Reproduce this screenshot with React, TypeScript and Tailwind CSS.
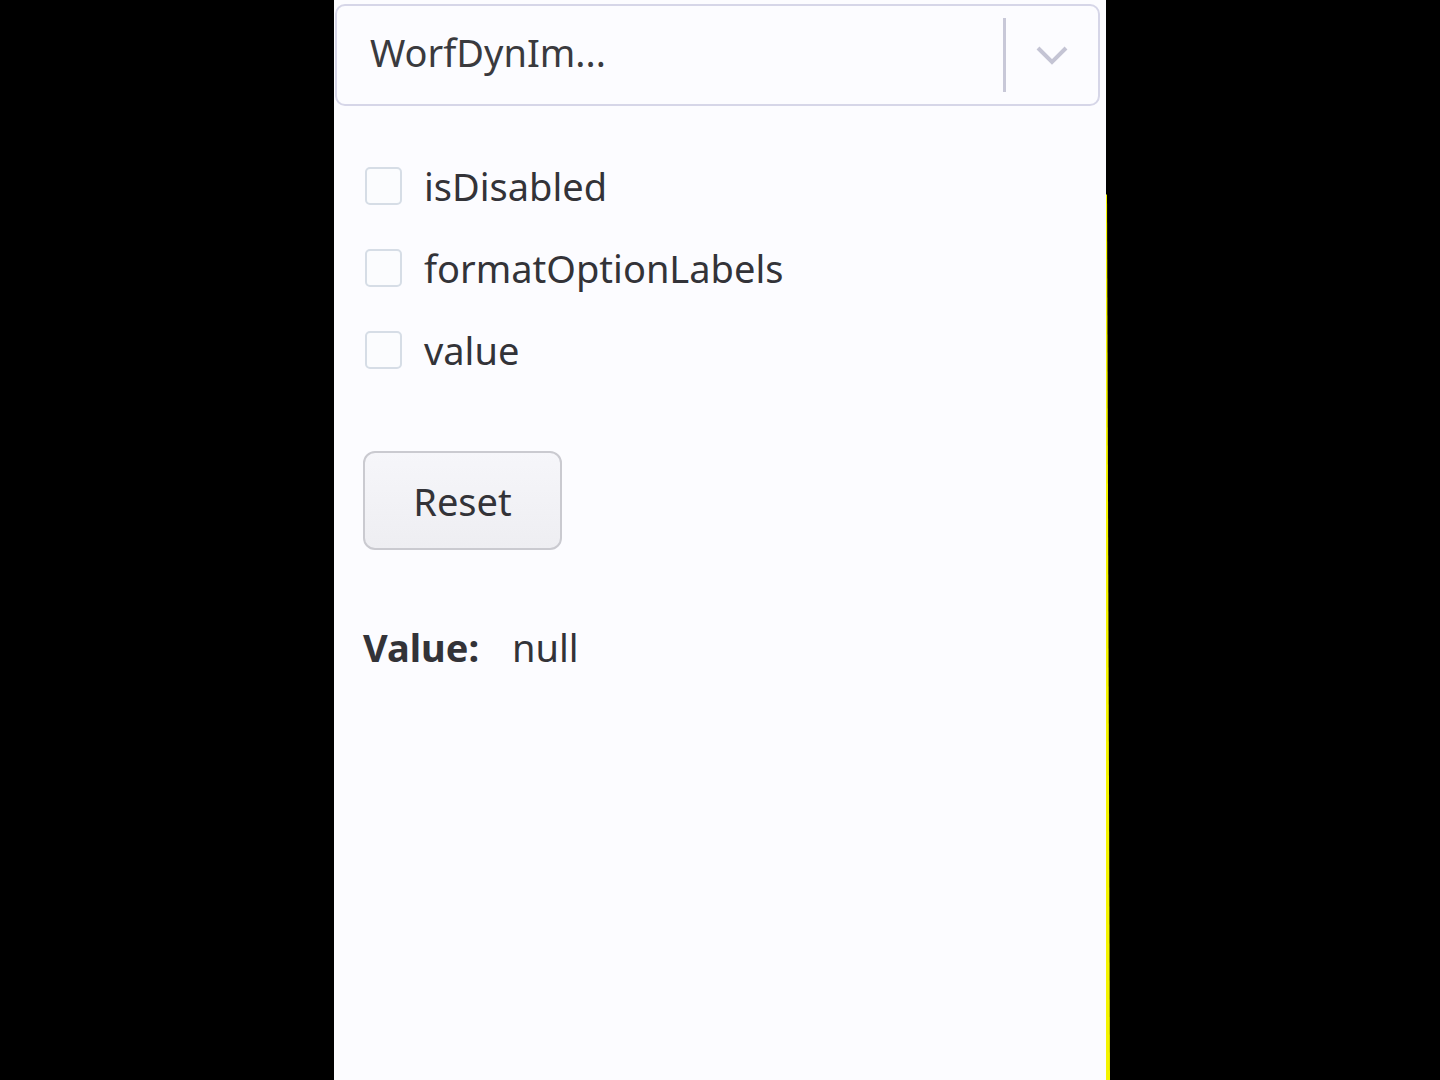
import React from "react";

function Checkbox({ label }: { label: string }) {
  return (
    <label className="flex items-center h-[82px]">
      <span className="w-[37px] h-[38px] rounded-[5px] border-2 border-[#d6dde6] bg-[#fbfcfe] shrink-0" />
      <span className="ml-[22px] text-[38px] text-[#333338] leading-none">{label}</span>
    </label>
  );
}

export default function App() {
  return (
    <div className="w-[1440px] h-[1080px] bg-black flex overflow-hidden" style={{ fontFamily: '"Noto Sans", "Open Sans", sans-serif' }}>
      <div className="ml-[334px] w-[772px] h-full bg-[#fcfcff] flex flex-col">
        <div className="mt-[4px] ml-px mr-[6px] h-[102px] rounded-[10px] border-2 border-[#d6d6e8] flex items-center">
          <div className="flex-1 pl-[33px] pb-[6px] text-[38px] text-[#3a3a3e] leading-none">WorfDynIm...</div>
          <div className="w-[3px] h-[74px] bg-[#c8c8d8]" />
          <div className="w-[92px] flex items-center justify-center">
            <svg width="34" height="22" viewBox="0 0 34 22">
              <path d="M3 4 L17 18 L31 4" fill="none" stroke="#c4c4d4" strokeWidth="4" />
            </svg>
          </div>
        </div>
        <div className="mt-[39px] pl-[31px] flex flex-col">
          <Checkbox label="isDisabled" />
          <Checkbox label="formatOptionLabels" />
          <Checkbox label="value" />
        </div>
        <div className="mt-[60px] pl-[29px]">
          <button className="w-[199px] h-[99px] rounded-[12px] border-2 border-[#cacad0] bg-gradient-to-b from-[#f6f6fa] to-[#eeeef2] text-[38px] text-[#333338] leading-none">
            Reset
          </button>
        </div>
        <div className="mt-[78px] pl-[29px] flex items-baseline text-[38px] text-[#333338] leading-none">
          <span className="font-bold">Value:</span>
          <span className="ml-[33px]">null</span>
        </div>
      </div>
      <div className="w-[4px] h-full bg-[#f4f400] [clip-path:polygon(0_18%,25%_18%,100%_100%,0_100%)]" />
    </div>
  );
}
